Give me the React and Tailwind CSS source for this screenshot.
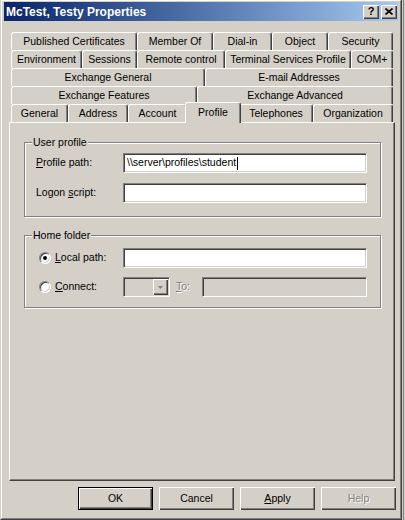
import React from 'react';

const raised = 'shadow-[inset_1px_1px_0_#fff,inset_-1px_-1px_0_#404040,inset_-2px_-2px_0_#808080]';
const sunken = 'border border-t-[#808080] border-l-[#808080] border-r-white border-b-white shadow-[inset_1px_1px_0_#404040,inset_-1px_-1px_0_#d4d0c8]';
const tabBase = 'h-[18px] shrink-0 flex items-center justify-center border-t border-l border-r border-t-white border-l-white border-r-[#404040] rounded-t-[3px] shadow-[inset_-1px_0_0_#808080] bg-[#d4d0c8]';

const backRows = [
    [
        { label: 'Published Certificates', w: 'w-[126px]' },
        { label: 'Member Of', w: 'w-[76px]' },
        { label: 'Dial-in', w: 'w-[59px]' },
        { label: 'Object', w: 'w-[56px]' },
        { label: 'Security', w: 'w-[65px]' },
    ],
    [
        { label: 'Environment', w: 'w-[71px]' },
        { label: 'Sessions', w: 'w-[55px]' },
        { label: 'Remote control', w: 'w-[88px]' },
        { label: 'Terminal Services Profile', w: 'w-[126px]' },
        { label: 'COM+', w: 'w-[42px]' },
    ],
    [
        { label: 'Exchange General', w: 'w-[194px]' },
        { label: 'E-mail Addresses', w: 'w-[188px]' },
    ],
    [
        { label: 'Exchange Features', w: 'w-[186px]' },
        { label: 'Exchange Advanced', w: 'w-[196px]' },
    ],
];

const frontRow = [
    { label: 'General', w: 'w-[57px]' },
    { label: 'Address', w: 'w-[60px]' },
    { label: 'Account', w: 'w-[59px]' },
    { label: 'Profile', w: 'w-[56px]', selected: true },
    { label: 'Telephones', w: 'w-[74px]' },
    { label: 'Organization', w: 'w-[80px]' },
];

function TitleButton({ children }) {
    return (
        <div className={`w-[16px] h-[14px] bg-[#d4d0c8] flex items-center justify-center ${raised}`}>
            {children}
        </div>
    );
}

function GroupBox({ title, className, children }) {
    return (
        <div className={`relative w-[357px] border border-[#808080] shadow-[inset_1px_1px_0_#fff,1px_1px_0_#fff] ${className}`}>
            <span className="absolute -top-[8px] left-[7px] px-[1px] bg-[#d4d0c8] leading-[14px]">{title}</span>
            {children}
        </div>
    );
}

function Radio({ checked }) {
    return (
        <div className="w-[12px] h-[12px] rounded-full bg-white border border-t-[#808080] border-l-[#808080] border-r-white border-b-white shadow-[inset_1px_1px_0_#404040,inset_-1px_-1px_0_#d4d0c8] flex items-center justify-center">
            {checked && <div className="w-[4px] h-[4px] rounded-full bg-black" />}
        </div>
    );
}

function Button({ children, isDefault, disabled }) {
    return (
        <div
            className={`w-[75px] h-[23px] flex items-center justify-center bg-[#d4d0c8] ${raised} ${
                isDefault ? 'border border-black' : ''
            } ${disabled ? 'text-[#808080] [text-shadow:1px_1px_0_#fff]' : 'text-black'}`}
        >
            {children}
        </div>
    );
}

export default function App() {
    return (
        <div className="w-[405px] h-[520px] bg-[#d4d0c8] flex text-[10.5px] text-black font-['Liberation_Sans',Arial,sans-serif] overflow-hidden">
            <div className="w-[402px] h-[520px] shrink-0 border-l border-r border-b border-l-[#d4d0c8] border-r-[#404040] border-b-[#404040]">
                <div className="h-full border border-t-white border-l-white border-r-[#808080] border-b-[#808080] px-[2px] pt-[1px] flex flex-col">
                    {/* title bar */}
                    <div className="h-[19px] bg-linear-to-r from-[#0a246a] to-[#a6caf0] flex items-center justify-between pl-[2px] pr-[1px]">
                        <span className="text-white font-bold text-[12px] leading-none">McTest, Testy Properties</span>
                        <div className="flex gap-[2px]">
                            <TitleButton>
                                <span className="font-bold text-[11px] leading-none">?</span>
                            </TitleButton>
                            <TitleButton>
                                <svg width="8" height="7" viewBox="0 0 8 7">
                                    <path d="M0.5 0.5 L7.5 6.5 M7.5 0.5 L0.5 6.5" stroke="#000" strokeWidth="1.6" />
                                </svg>
                            </TitleButton>
                        </div>
                    </div>

                    {/* tabs */}
                    <div className="mt-[11px] ml-[7px] flex flex-col">
                        {backRows.map((row, i) => (
                            <div key={i} className="flex h-[18px]">
                                {row.map((t) => (
                                    <div key={t.label} className={`${tabBase} ${t.w}`}>
                                        {t.label}
                                    </div>
                                ))}
                            </div>
                        ))}
                        <div className="flex h-[18px]">
                            {frontRow.map((t) =>
                                t.selected ? (
                                    <div
                                        key={t.label}
                                        className={`relative z-10 -mx-[2px] -mt-[2px] h-[21px] shrink-0 flex items-center justify-center border-t border-l border-r border-t-white border-l-white border-r-[#404040] rounded-t-[3px] shadow-[inset_-1px_0_0_#808080] bg-[#d4d0c8] ${t.w}`}
                                    >
                                        {t.label}
                                    </div>
                                ) : (
                                    <div key={t.label} className={`${tabBase} ${t.w}`}>
                                        {t.label}
                                    </div>
                                )
                            )}
                        </div>
                    </div>

                    {/* tab panel */}
                    <div className="ml-[5px] w-[386px] h-[359px] border border-t-white border-l-white border-r-[#404040] border-b-[#404040] shadow-[inset_-1px_-1px_0_#808080] pt-[19px] pl-[14px]">
                        <GroupBox title="User profile" className="h-[75px]">
                            <div className="grid grid-cols-[87px_244px] gap-y-[10px] items-center pt-[10px] pl-[11px]">
                                <span>
                                    <span className="underline">P</span>rofile path:
                                </span>
                                <div className={`h-[20px] bg-white flex items-center pl-[3px] ${sunken}`}>
                                    <span>{'\\\\server\\profiles\\student'}</span>
                                    <span className="w-[1px] h-[13px] bg-black ml-[1px]" />
                                </div>
                                <span>
                                    Logon <span className="underline">s</span>cript:
                                </span>
                                <div className={`h-[20px] bg-white ${sunken}`} />
                            </div>
                        </GroupBox>

                        <GroupBox title="Home folder" className="h-[73px] mt-[18px]">
                            <div className="grid grid-cols-[84px_244px] gap-y-[9px] items-center pt-[12px] pl-[14px]">
                                <div className="flex items-center gap-[4px]">
                                    <Radio checked />
                                    <span>
                                        <span className="underline">L</span>ocal path:
                                    </span>
                                </div>
                                <div className={`h-[20px] bg-white ${sunken}`} />
                                <div className="flex items-center gap-[4px]">
                                    <Radio />
                                    <span>
                                        <span className="underline">C</span>onnect:
                                    </span>
                                </div>
                                <div className="flex items-center">
                                    <div className={`w-[47px] h-[20px] bg-[#d4d0c8] flex justify-end items-center pr-[1px] ${sunken}`}>
                                        <div className={`w-[15px] h-[16px] bg-[#d4d0c8] flex items-center justify-center ${raised}`}>
                                            <svg width="7" height="5" viewBox="0 0 7 5">
                                                <path d="M1 1 L6 1 L3.5 3.5 Z" fill="#808080" />
                                                <path d="M2 2 L5 2 L3.5 4 Z" fill="#808080" />
                                            </svg>
                                        </div>
                                    </div>
                                    <span className="ml-[6px] w-[26px] text-[#808080] [text-shadow:1px_1px_0_#fff]">
                                        <span className="underline">T</span>o:
                                    </span>
                                    <div className={`w-[165px] h-[20px] bg-[#d4d0c8] ${sunken}`} />
                                </div>
                            </div>
                        </GroupBox>
                    </div>

                    {/* buttons */}
                    <div className="mt-[6px] flex justify-end gap-[6px] pr-[2px]">
                        <Button isDefault>OK</Button>
                        <Button>Cancel</Button>
                        <Button>
                            <span>
                                <span className="underline">A</span>pply
                            </span>
                        </Button>
                        <Button disabled>Help</Button>
                    </div>
                </div>
            </div>
            <div className="w-[1px] ml-[1px] h-full bg-[#808080]" />
        </div>
    );
}
